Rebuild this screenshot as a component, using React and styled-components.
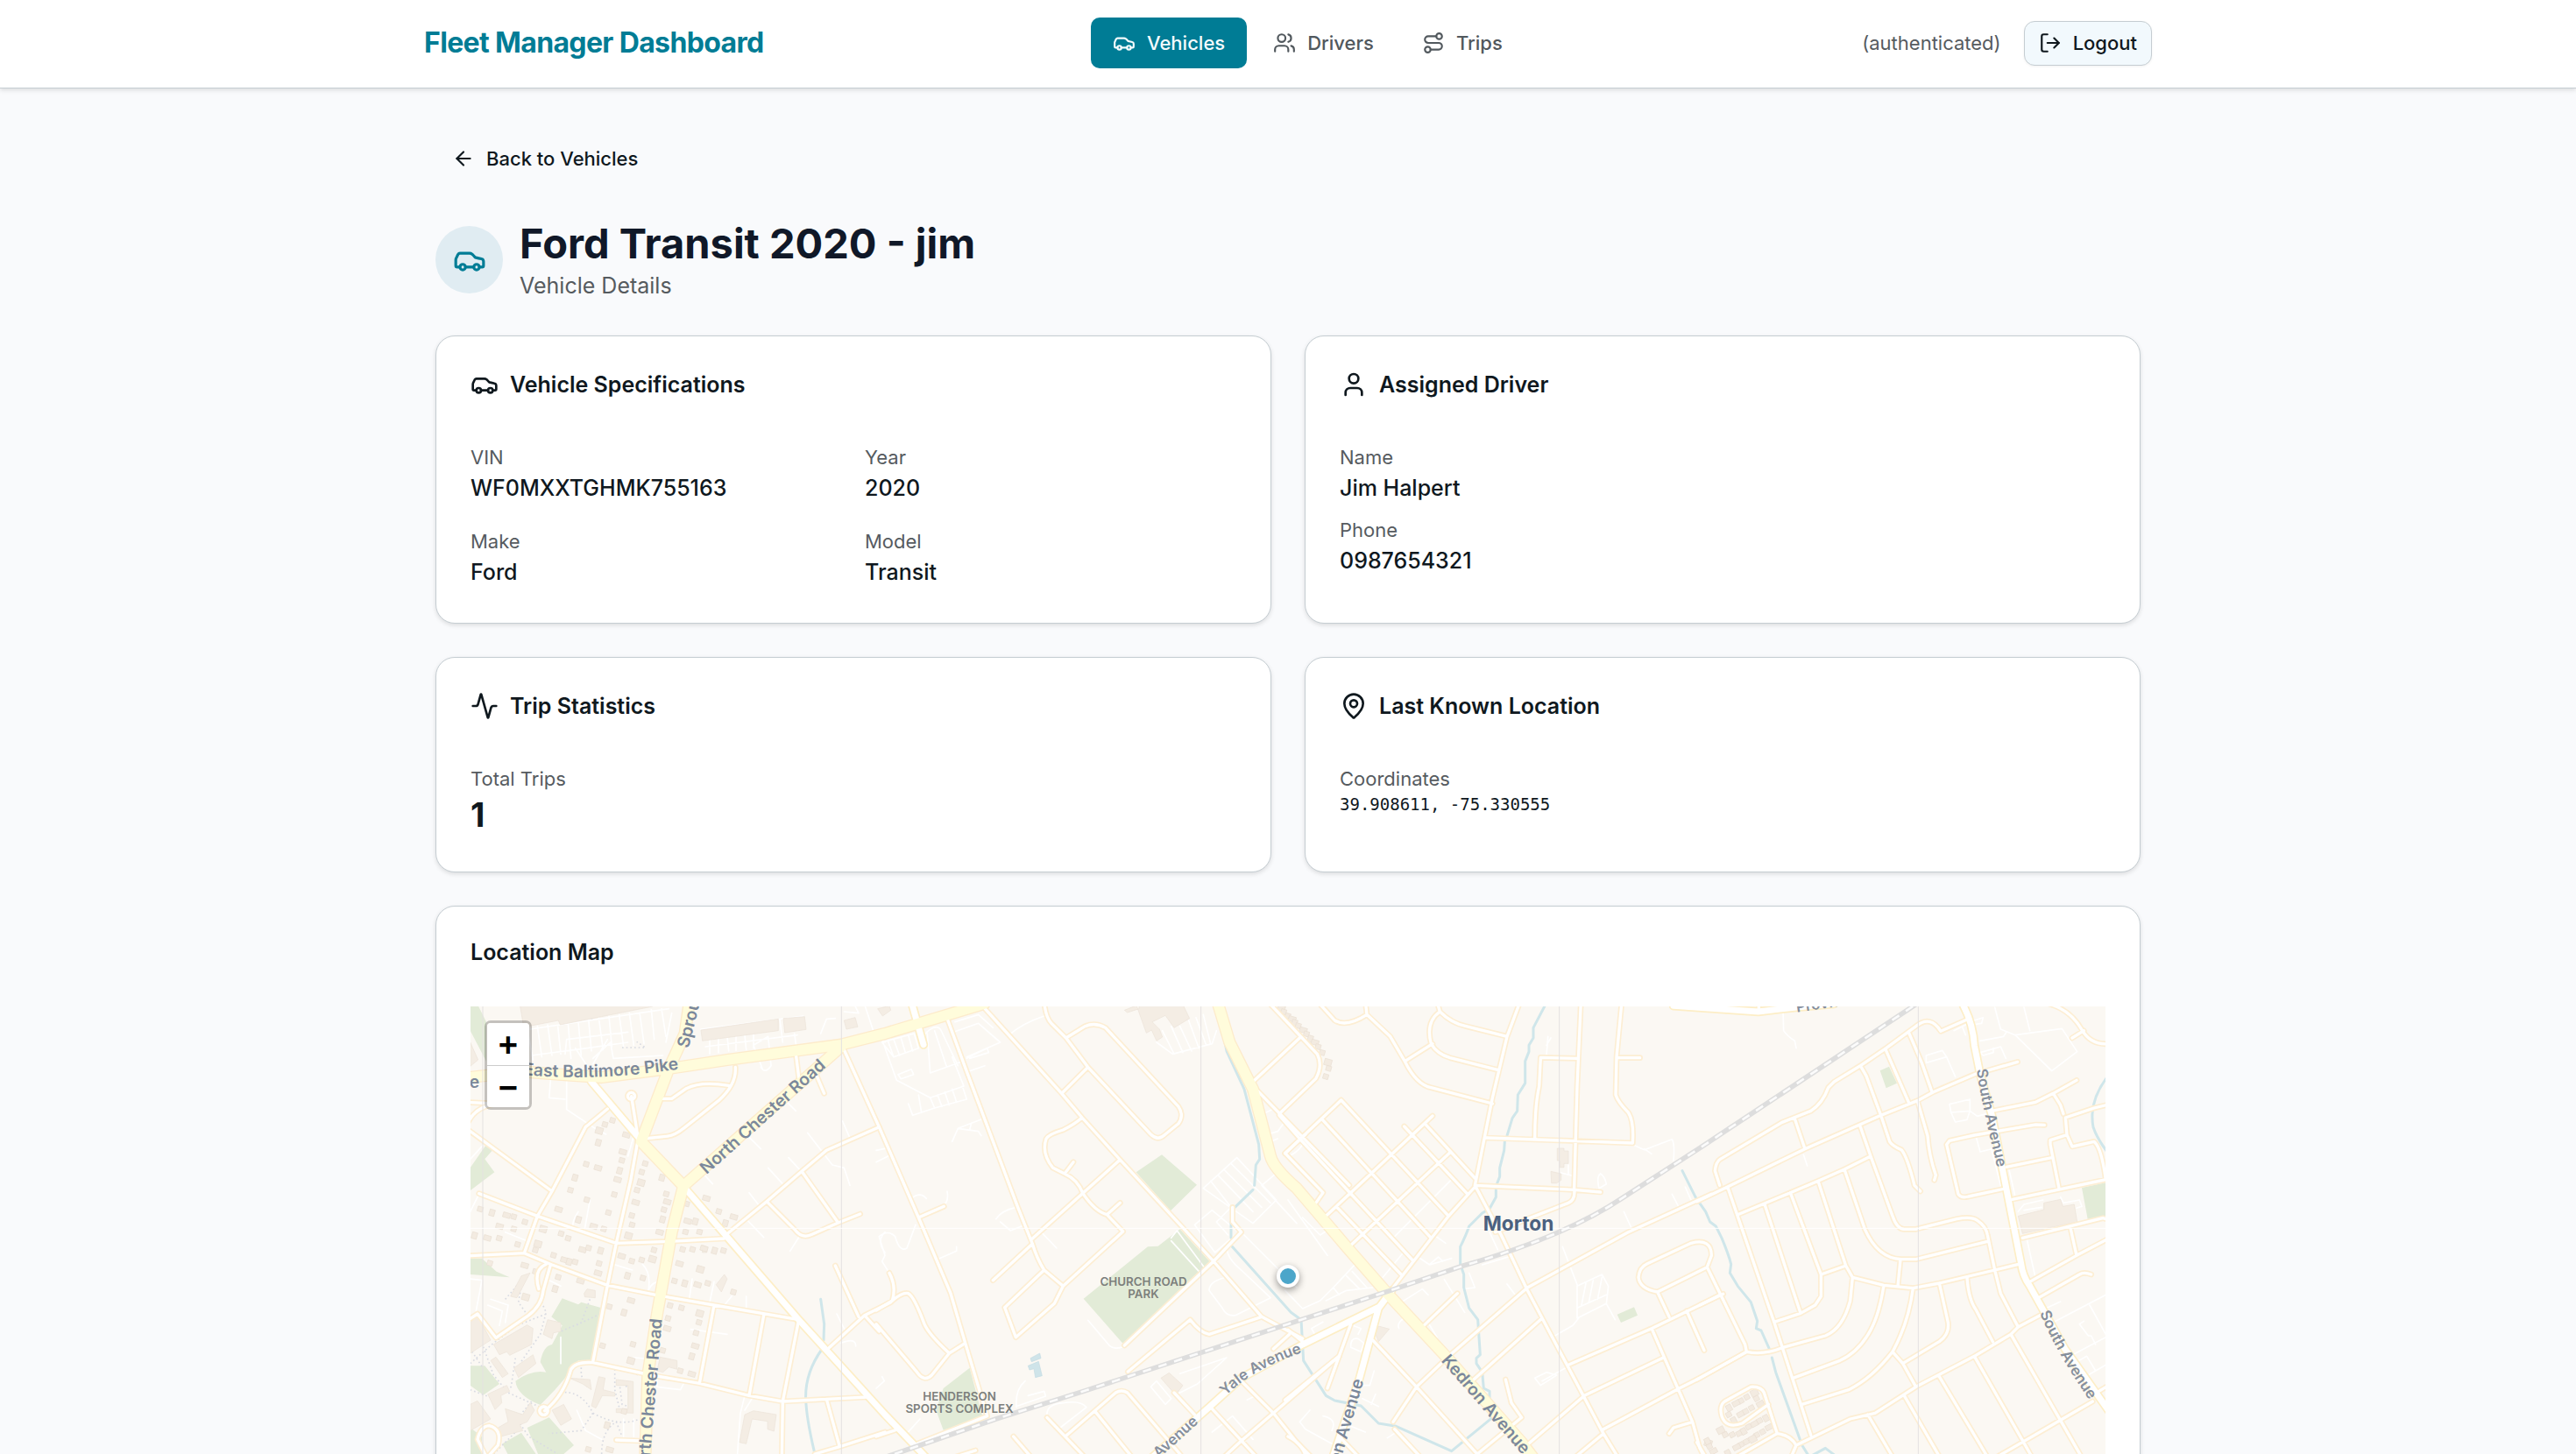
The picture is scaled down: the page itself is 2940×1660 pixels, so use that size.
import React from "react";
import styled, { createGlobalStyle } from "styled-components";
import {
  Activity,
  ArrowLeft,
  Car,
  LogOut,
  MapPin,
  Route,
  User,
  Users,
} from "lucide-react";

const GlobalStyle = createGlobalStyle`
  * {
    box-sizing: border-box;
  }

  body {
    margin: 0;
    background: #f9fafc;
    color: #0f181e;
    font-family: Inter, "Liberation Sans", sans-serif;
    font-size: 25px;
    line-height: 38px;
  }
`;

const Header = styled.header`
  background: #ffffff;
  border-bottom: 1px solid #c5cdd2;
  box-shadow: 0 2px 5px rgba(0, 0, 0, 0.12);
`;

const HeaderInner = styled.div`
  display: flex;
  align-items: center;
  justify-content: space-between;
  max-width: 2048px;
  margin: 0 auto;
  padding: 20px 38px 22px;
`;

const Brand = styled.div`
  color: #007c95;
  font-size: 32px;
  font-weight: 700;
  letter-spacing: -0.02em;
`;

const Nav = styled.nav`
  display: flex;
  gap: 5px;
  margin-right: 12px;
`;

const NavLink = styled.a`
  display: flex;
  align-items: center;
  gap: 13px;
  height: 58px;
  padding: 0 25px;
  border-radius: 10px;
  background: ${(props) => (props.$active ? "#007c95" : "transparent")};
  color: ${(props) => (props.$active ? "#f4fbfd" : "#51585d")};
  font-size: 22px;
  font-weight: 500;
  text-decoration: none;
`;

const Account = styled.div`
  display: flex;
  align-items: center;
  gap: 26px;
  color: #565b5f;
  font-size: 22px;
`;

const LogoutButton = styled.button`
  display: flex;
  align-items: center;
  gap: 13px;
  height: 51px;
  padding: 0 16px;
  border: 1px solid #c5cdd2;
  border-radius: 12px;
  background: #f2f9fd;
  box-shadow: 0 1px 3px rgba(0, 0, 0, 0.06);
  color: #0f181e;
  font-family: inherit;
  font-size: 22px;
  font-weight: 500;
`;

const Main = styled.main`
  display: flex;
  flex-direction: column;
  gap: 38px;
  max-width: 2048px;
  margin: 0 auto;
  padding: 51px;
`;

const BackLink = styled.a`
  display: flex;
  align-items: center;
  align-self: flex-start;
  gap: 13px;
  height: 58px;
  padding: 0 19px;
  color: #0f181e;
  font-size: 22px;
  font-weight: 500;
  text-decoration: none;
`;

const TitleRow = styled.div`
  display: flex;
  align-items: center;
  gap: 19px;
`;

const TitleIcon = styled.div`
  display: flex;
  align-items: center;
  justify-content: center;
  width: 77px;
  height: 77px;
  border-radius: 50%;
  background: #e0ecf2;
  color: #007c95;
`;

const Title = styled.h1`
  margin: 0;
  color: #101828;
  font-size: 47px;
  font-weight: 700;
  line-height: 59px;
`;

const Subtitle = styled.p`
  margin: 0;
  color: #565b5f;
`;

const CardGrid = styled.div`
  display: grid;
  grid-template-columns: 1fr 1fr;
  gap: 38px;
`;

const Card = styled.section`
  display: flex;
  flex-direction: column;
  gap: ${(props) => (props.$compact ? "49px" : "51px")};
  padding: 39px;
  border: 1px solid #c5cdd2;
  border-radius: 22px;
  background: #ffffff;
  box-shadow: 0 2px 5px rgba(0, 0, 0, 0.12);
`;

const CardTitle = styled.h2`
  display: flex;
  align-items: center;
  gap: 13px;
  margin: 0;
  font-size: 25px;
  font-weight: 600;
  line-height: 26px;
`;

const Fields = styled.dl`
  display: grid;
  grid-template-columns: ${(props) => (props.$columns === 2 ? "1fr 1fr" : "1fr")};
  gap: ${(props) => (props.$columns === 2 ? "26px" : "13px")};
  margin: 0;
`;

const FieldLabel = styled.dt`
  color: #565b5f;
  font-size: 22px;
  line-height: 32px;
`;

const FieldValue = styled.dd`
  margin: 0;
  font-weight: 500;
`;

const StatValue = styled(FieldValue)`
  font-size: 38px;
  font-weight: 700;
  line-height: 51px;
`;

const CodeValue = styled(FieldValue)`
  font-family: "DejaVu Sans Mono", monospace;
  font-size: 19px;
  font-weight: 400;
  line-height: 26px;
`;

const MapFrame = styled.div`
  position: relative;
  height: 616px;
  overflow: hidden;
  background: #fbf8f3;
`;

const MapDrawing = styled.svg`
  display: block;
  width: 100%;
  height: 100%;
  font-family: Inter, sans-serif;
`;

const ZoomControl = styled.div`
  position: absolute;
  top: 16px;
  left: 16px;
  display: flex;
  flex-direction: column;
  border: 3px solid rgba(0, 0, 0, 0.22);
  border-radius: 7px;
  background-clip: padding-box;
`;

const ZoomButton = styled.button`
  width: 48px;
  height: 48px;
  padding: 8px 0 0;
  border: 0;
  border-radius: ${(props) => (props.$last ? "0 0 4px 4px" : "4px 4px 0 0")};
  border-top: ${(props) => (props.$last ? "1px solid #cccccc" : "0")};
  background: #ffffff;
  color: #000000;
  font-family: "Liberation Mono", monospace;
  font-size: 38px;
  font-weight: 700;
  line-height: 40px;
`;

const Marker = styled.div`
  position: absolute;
  top: 50%;
  left: 50%;
  width: 26px;
  height: 26px;
  margin: -13px 0 0 -13px;
  border: 4px solid #ffffff;
  border-radius: 50%;
  background: #4ca6ca;
  box-shadow: 0 3px 8px rgba(0, 0, 0, 0.4);
`;

// The map is drawn in four sections, each with its own origin.
const SECTIONS = [
  {
    x: -21,
    green: [
      "M20 20H45L75 80V215L20 110Z",
      "M20 580L75 500L100 515L70 550L103 595L20 658Z",
      "M20 890H60L110 935L155 955L20 945Z",
      "M335 1027L390 1048L400 1040L470 1060L435 1245L390 1240L345 1300L310 1340L260 1392Q180 1360 175 1310Q230 1270 280 1280L260 1245Q270 1190 300 1185L335 1120L298 1090Z",
      "M20 1258H70L120 1320L65 1358L20 1325Z",
      "M215 1470L290 1435L375 1530L340 1560L365 1700H310Z",
      "M130 1525L195 1487L300 1640H190Z",
      "M20 1470L60 1500V1600H20Z",
    ],
    buildings: [
      "M190 20L203 98L322 75L328 90L645 27V20Z",
      "M810 108L1075 70V110L815 145Z",
      "M1092 68L1165 62L1170 106L1097 117Z",
      "M1300 75L1338 65L1347 97L1308 105Z",
      "M20 150L47 210L20 232Z",
      "M20 1110L45 1085L90 1170L20 1215Z",
      "M100 1185L215 1118L235 1130L230 1185L155 1222L145 1210L120 1220Z",
      "M285 1100L330 1110V1140L305 1145L300 1165L270 1150Z",
      "M20 1390L45 1378L90 1440L20 1480Z",
      "M140 1405L200 1425L225 1385L240 1410L215 1450L190 1460L200 1480L125 1500L115 1470L150 1450Z",
      "M460 1295L482 1300L475 1340L515 1350V1362L472 1360L450 1403L435 1395Z",
      "M520 1305L578 1312V1420L520 1418V1405H560V1325L520 1325Z",
      "M990 1412L1068 1425L1060 1482L1038 1475V1448L985 1440L965 1525L942 1520L960 1425Z",
      "M670 1228L728 1240V1270L700 1262L680 1280L660 1275Z",
      "M300 1410L340 1390L367 1440L330 1462Z",
      "M195 950L225 940L180 1025L158 1020Z",
      "M90 1240L108 1228L150 1285L130 1298Z",
      "M170 1265L235 1220L245 1250L185 1298Z",
      "M360 1300L430 1305L435 1340L405 1320Z",
      "M815 870V845L830 850V870Z",
      "M890 945L900 960L880 1005L862 980Z",
      "M80 1355L145 1325L155 1345L125 1360L128 1385L105 1408Z",
      "M410 1010L420 995L448 1000V1025L412 1022Z",
    ],
    houses: [
      [460, 450], [482, 432], [508, 418], [552, 467], [460, 492], [418, 568], [540, 525], [540, 555],
      [533, 588], [522, 620], [620, 566], [608, 595], [603, 628], [592, 657], [514, 672], [584, 698],
      [678, 612], [692, 670], [692, 696], [684, 724], [680, 755], [666, 800], [574, 744], [575, 776],
      [560, 810], [494, 734], [478, 790], [455, 580], [380, 612], [364, 657], [320, 722], [420, 690],
      [392, 756], [440, 780], [332, 806], [356, 822], [268, 787], [208, 766], [170, 748], [142, 742],
      [96, 732], [55, 722], [118, 780], [170, 790], [36, 810], [76, 820], [120, 822], [183, 843],
      [250, 838], [244, 862], [306, 880], [340, 895], [360, 900], [380, 903], [402, 860], [426, 855],
      [468, 862], [536, 882], [574, 900], [608, 896], [642, 890], [650, 862], [462, 908], [455, 940],
      [560, 948], [612, 958], [395, 967], [322, 955], [312, 993], [204, 914], [88, 907], [244, 936],
      [208, 1020], [748, 860], [782, 860], [818, 856], [858, 862], [888, 864], [734, 908], [720, 968],
      [756, 974], [796, 980], [834, 976], [922, 1006], [806, 925], [758, 800], [806, 800], [762, 762],
      [792, 762], [762, 704], [826, 684], [872, 730], [895, 768], [920, 748], [705, 1052], [744, 1060],
      [804, 1076], [804, 1110], [794, 1146], [788, 1190], [780, 1224], [698, 1096], [692, 1130],
      [497, 1056], [548, 1074], [568, 1034], [474, 1190], [578, 1185], [568, 1238], [680, 1206],
      [740, 1276], [776, 1286], [490, 1460], [425, 1545], [495, 1545], [548, 1415],
    ],
    minor: [
      "M0 440L300 660L415 440Q440 420 490 378",
      "M50 668L250 745L520 838L700 832L890 822",
      "M300 660L250 745L205 872L0 882",
      "M205 872L300 912L490 982L670 1018L855 1050L1145 1100",
      "M595 480L570 620L520 838L490 982L440 1245",
      "M572 335L595 480",
      "M615 480L690 472Q720 470 750 445L870 350Q932 295 928 235",
      "M670 343H710L760 308Q810 282 905 298",
      "M1135 190L1145 270",
      "M1200 250L1232 325",
      "M1295 165L1420 440",
      "M1420 440L1240 520L1155 592L1035 695L895 810",
      "M1155 592L1280 768",
      "M1035 695L1130 790Q1155 825 1190 808L1280 768L1355 738",
      "M1270 915L1350 1090",
      "M1460 1040L1370 1085L1250 1195",
      "M1370 1085L1420 1140",
      "M1145 1100L1090 1380L1085 1700",
      "M1025 1085L975 1360",
      "M855 1050L805 1318",
      "M275 1412Q340 1360 365 1270Q380 1243 440 1247L640 1290L805 1318L975 1360L1090 1380L1240 1372L1380 1365",
      "M1240 1372L1285 1535",
      "M1200 1560L1285 1535L1440 1485",
      "M0 1110L45 1080L108 1162L220 1085Q265 1050 270 1000L295 912",
      "M280 910Q235 930 255 995",
      "M520 1512L600 1515",
      "M75 1570L45 1510Q55 1465 85 1463Q130 1475 115 1530L80 1570",
      "M0 355L110 360Q40 370 15 420",
      "M272 1398A14 14 0 1 1 271 1398",
      "M572 322A12 12 0 1 1 571 322",
    ],
    primary: ["M435 285L600 480", "M760 655L1140 1095L1440 1425L1560 1550L1700 1700"],
    yellow: [
      "M0 272L200 250Q350 262 470 270L700 240L900 210L1290 158L1440 120L1780 18",
      "M772 0L755 120L700 240L605 490L750 642L710 800L660 1080L628 1290L615 1700",
      "M750 642L1290 165",
    ],
    lanes: [
      "M215 100L235 210M250 95L265 200M285 90L300 195M320 95L330 190M355 85L365 205M390 78L400 195M425 70L435 180M460 65L475 175M495 60L505 165M530 55L545 165M565 50L580 160M600 48L615 155M640 38L650 140M675 35L690 130M710 50L690 150",
      "M230 195L420 170L560 150M225 105L700 35M345 190L350 140L560 115",
      "M440 205L500 150L510 205L680 195M380 170L420 230M490 140L440 225",
      "M810 105L1160 60M825 165L1140 125M840 140V190M870 135V185M900 130L905 180M930 130V178M960 125L965 175M990 120V170M1080 70L1090 150M1130 120L1140 190",
      "M350 280V380L440 440L485 465M295 280L290 340L345 345M970 470L1015 515M800 580L850 635",
      "M1175 460L1260 570L1300 580L1320 640M1110 545L1170 610L1205 650M1040 580L1090 635M975 665L1010 710M960 750L1025 818",
      "M1150 810L1115 865M1440 800Q1410 830 1440 870M1100 350L1135 385M1295 420L1325 490M1020 240L990 160L1040 130L1050 230Q1030 260 1015 235",
      "M140 800L215 830M390 730Q370 760 370 785M430 690L410 800M580 470L560 540",
      "M510 910L575 930M610 910Q640 940 630 1000Q640 970 680 965M780 960L770 1030M855 970L840 1040M915 1020L890 1050M965 1020V1065",
      "M20 960L60 965L40 1070M90 1030L150 1050L140 1110M80 1050L130 1070L120 1120M20 550L75 490",
      "M1275 1080L1305 1140M1290 1180Q1340 1160 1340 1190M960 1360L945 1420L935 1560M985 1370L960 1410",
      "M580 1230L650 1235M775 1133L900 1150M660 1300V1330L740 1340L750 1320M385 1410L415 1480L470 1510M545 1440V1500M580 1440V1500",
      "M1220 120L1240 70L1270 68M1300 45L1350 50L1335 20M1370 20L1400 110L1440 150M20 730L50 670M280 960L330 985M330 1160V1250",
    ],
    dotted: [
      "M295 920L260 1030L280 1075L260 1150L190 1250",
      "M20 1250L100 1180L180 1120L280 1080",
      "M60 1180L100 1290L150 1350L260 1400",
      "M140 1030L200 960L185 1040L220 1090",
      "M430 1030L400 1110L330 1140M465 1080L380 1120",
      "M400 1250V1290L420 1330M515 1270V1340L530 1400M440 1250L600 1290",
      "M330 1350Q400 1340 440 1420Q530 1470 600 1440M440 1420L400 1480L290 1490M470 1560Q470 1480 520 1450L540 1500",
      "M230 1380L180 1440L220 1500L320 1560M20 1340L100 1370L160 1330L175 1230M60 1260L20 1200M100 1560L180 1480",
      "M540 168H620L590 148M310 27H345M432 25L437 70",
      "M530 1310L570 1340V1400L540 1390Z",
    ],
    water: ["M1220 1030L1232 1115L1230 1170", "M1225 1200Q1160 1290 1170 1390Q1175 1460 1205 1580"],
  },
  {
    x: 1389,
    green: [
      "M890 595L978 535L1098 638L1008 727Z",
      "M1040 790L1150 910L845 1182L710 1028L930 850L965 848Z",
      "M320 1265L365 1435L230 1478L205 1410L230 1335Z",
    ],
    buildings: [
      "M890 20L925 118L943 108L960 145L980 132L970 105L945 80L990 58L1020 100L1073 68L1050 20Z",
      "M850 40L900 20V35L860 48Z",
      "M5 35L45 25L50 40L22 60Z",
      "M975 1300L1003 1282L1050 1325L1025 1358Z",
    ],
    pools: ["M528 1232L560 1215L564 1232L532 1244Z", "M520 1258L556 1243L568 1292L545 1298L540 1268L525 1272Z"],
    houses: [
      [1385, 32], [1396, 46], [1410, 60], [1422, 70], [1434, 82], [1446, 94], [1460, 108], [1474, 122],
      [1488, 136], [1500, 150], [1514, 166], [1528, 186], [1545, 216], [1550, 240], [1540, 268],
    ],
    minor: [
      "M10 440L145 750L255 1010L305 1180L380 1430L140 1525",
      "M350 10L635 325L705 408L835 552L1050 785L1155 900L1320 1090L1460 1165",
      "M240 60L310 250L485 715L535 840Q550 890 575 930L640 985L610 1045L478 1160L440 1058L575 930",
      "M575 10Q580 65 600 85L650 135L725 235L940 465Q965 490 990 465L1035 428Q1055 400 1035 370L785 100Q750 80 715 95L650 135",
      "M725 235L635 325",
      "M705 408Q680 430 640 450Q590 465 582 480Q565 530 605 580L645 600Q690 620 708 668Q750 730 790 740L845 798L640 985",
      "M645 600L675 560",
      "M790 740L835 700",
      "M835 552L535 822",
      "M535 840L400 965",
      "M145 750L232 712",
      "M1155 900L1250 800L1220 765V715",
      "M1155 900L850 1188",
      "M1320 1090L1140 1150Q1110 1145 1075 1100L862 1278",
      "M0 1068L55 1035Q90 1005 110 1010Q130 1020 165 1115Q180 1150 250 1215",
      "M45 940Q70 985 55 1035",
      "M0 1115L140 1280Q165 1315 190 1290L250 1215L305 1180",
      "M0 1500L75 1475",
      "M585 1435L780 1640",
      "M650 1498L820 1350Q840 1338 860 1350L1040 1560L1100 1640",
      "M750 1415L900 1600",
      "M470 1500L590 1640",
      "M340 1548L240 1580",
      "M1290 285L1450 135",
      "M1350 20L1510 190Q1530 230 1505 275L1380 395",
      "M1300 310L1620 640",
      "M1400 530L1470 465M1400 530L1530 665L1495 715",
      "M1250 1310L1360 1420L1440 1520L1520 1600",
      "M1145 1400L1330 1600",
      "M1020 1350L1090 1425",
      "M1585 1225L1250 1515L1180 1580",
      "M1415 1150L1360 1200",
    ],
    primary: ["M120 10L162 158"],
    yellow: ["M1165 0L1210 150L1290 310L1350 540Q1360 580 1440 650L1610 850L1750 1010L1950 1225L2210 1520L2300 1640"],
    lanes: [
      "M20 150L130 120L145 170L60 200ZM40 145L60 200M60 140L80 195M85 135L100 185M110 125L125 180",
      "M20 140L70 280L185 340L300 300L260 200M175 120L185 255L295 215M200 110L240 230M150 140Q200 80 220 105L280 230",
      "M110 360L125 400L200 375L310 345L295 300M145 330L155 390M185 340L200 375M210 330L225 370M235 320L250 365M260 310L275 355M75 260L120 242L128 260L85 275Z",
      "M265 115L350 85L425 150L310 200M270 80L350 55L400 100M455 125Q500 85 575 60M310 205L380 170L385 185L320 205",
      "M260 490L280 445L365 412M280 445L350 455L360 470M325 430L320 450M315 250L372 230",
      "M410 755Q430 725 480 715M425 765L460 795L510 775M565 800L618 855M0 560L45 538M0 520L40 512M210 893L275 865V850",
      "M120 685Q150 660 172 685M225 712Q250 700 243 660M135 775L105 855Q80 870 65 815Q40 790 10 815L30 880L20 900L45 940",
      "M960 150L1015 190L1150 155L1165 110M980 110L1020 190M1010 95L1050 185M1040 95L1080 180M1070 75L1105 170M1095 65L1130 160M1120 55L1145 155",
      "M1120 650L1235 545L1370 690L1290 770ZM1145 625L1215 715M1170 605L1290 730M1190 585L1320 715M1215 565L1350 700",
      "M1090 775L1150 725L1240 800L1160 870ZM1165 765L1215 715M1165 765L1205 810M1200 850Q1200 890 1250 930L1350 1025L1230 1085Q1200 1090 1185 1060L1140 1000Q1140 970 1190 957M1260 810L1440 990",
      "M1010 820L1030 795L1130 930M1110 940L1010 830M725 1102L800 1190Q820 1205 850 1190",
      "M480 1400Q475 1340 510 1310M485 1395L580 1362L575 1345L520 1360M585 1430Q580 1390 640 1385Q700 1375 720 1400L630 1470M105 1490L150 1440M0 1335L28 1310L20 1295",
      "M940 1330L960 1310L1010 1370L990 1390ZM1040 1285L1200 1230L1100 1320L1030 1355M1150 1485L1220 1430L1290 1510M1270 1375L1300 1360M1440 770L1320 640M1320 640L1380 590",
      "M1325 395L1355 380M1340 465L1375 455L1400 420M1350 490L1375 480",
    ],
    dotted: [],
    water: [
      "M1190 130L1200 180L1260 310L1310 500L1313 550L1300 570L1295 640",
      "M1290 655L1225 718",
      "M1215 765V820",
      "M1215 845L1420 1075L1455 1100L1463 1240L1540 1360L1570 1377L1660 1395L1720 1455L1780 1465L1970 1550L2110 1435",
    ],
  },
  {
    x: 2799,
    green: ["M1127 1082L1185 1057L1197 1085L1140 1110Z"],
    buildings: [
      "M922 513H945V522H960V565H945V578H930V555H922Z",
      "M900 592L935 600V622L920 632H902Z",
      "M310 1122L347 1132L310 1175L300 1150Z",
    ],
    houses: [[1437, 1520]],
    minor: [
      "M110 20L160 75Q200 100 270 55L265 10",
      "M270 55L350 130L400 215Q440 295 490 305L700 360",
      "M510 10L520 45Q560 85 610 95L750 130",
      "M520 45Q470 80 490 155Q510 190 555 203L720 245",
      "M495 155L400 215",
      "M795 10L750 130L700 340L640 640",
      "M1003 10L990 300L980 650Q985 690 960 700L820 755L710 800",
      "M1143 10L1125 200L1122 330Q1130 355 1165 390Q1185 420 1180 495L680 477",
      "M1125 203H1205",
      "M990 205L865 202L860 300Q845 370 845 480",
      "M640 640L980 655L1070 663",
      "M640 640L730 810L820 1000L1080 1490L1160 1620",
      "M182 348L550 745",
      "M118 415L490 820",
      "M-30 400L40 480L430 900",
      "M165 712L390 948",
      "M398 438L615 670",
      "M470 430L640 615",
      "M-10 530L182 348",
      "M495 402L130 745",
      "M555 527L210 850",
      "M640 645L550 745L360 990",
      "M820 990L1165 800L1450 670",
      "M820 990L550 1225L440 1330L360 1450",
      "M870 1095L630 1310",
      "M290 1170L440 1330L720 1640",
      "M365 1475L500 1620",
      "M215 1115L175 1225L135 1335",
      "M-10 1375L175 1225",
      "M465 1120L580 1010",
      "M960 1255L1245 1130L1410 1050L1490 1012",
      "M1015 1360L1285 1230",
      "M1080 1475L1340 1335L1410 1300L1570 1210",
      "M800 1545L1015 1360",
      "M960 1590L1080 1490",
      "M1245 1130L1385 1450L1410 1540L1440 1600",
      "M1305 1490L1320 1470L1385 1450",
      "M1265 1005L1305 1090",
      "M1435 920L1265 1005Q1205 995 1200 955Q1203 920 1230 908L1380 838Q1450 820 1450 880L1435 920",
      "M1365 1070L1425 1205",
      "M745 1305L765 1385L800 1435L600 1600",
      "M0 1135L50 1175",
      "M180 1505L290 1620",
      "M0 1500Q60 1530 65 1590",
    ],
    primary: ["M355 1000L310 1060L245 1300L130 1640", "M310 1057L50 1185L-160 1300L-270 1400L-520 1620"],
    yellow: [],
    lanes: [
      "M560 620L360 820M395 870L325 955M500 810L540 838M690 800L718 860M665 912L770 880",
      "M445 885L485 912L560 890M485 910L515 885L530 900M380 1045L460 995L480 1015M535 962L605 1075M620 940L640 990L600 995M750 978L780 1018",
      "M155 990L235 905M155 990L175 1015M155 990L110 1035L50 1062L-10 1000M200 950L245 995M220 935L270 990M130 1035L200 1000L290 990M235 905L300 990",
      "M990 985L1075 945L1097 985L1090 1045L990 1095ZM1020 975L1005 1050M1045 965L1030 1040M1075 955L1060 1030M990 1060L1090 1015M1090 1045L1120 1100M940 850L990 980M995 1095L975 1120L905 1160",
      "M845 1300L885 1280L920 1290L865 1325ZM870 1310L960 1260M1180 500L1220 518L1315 482Q1325 500 1320 555M1220 515L1245 532",
      "M1070 600Q1055 610 1065 650L1090 635Q1085 610 1070 600M960 570V600M935 597L975 607M885 195L890 130M900 135L885 160",
      "M1150 730L1180 795M1315 670L1340 718M1360 645L1382 695M80 1130L120 1108M80 1130L95 1155M210 1115L250 1130L240 1150M215 1190Q215 1160 240 1165L260 1180L250 1210L215 1195",
      "M380 1130Q370 1110 405 1090L435 1135M480 1110L510 1160M300 1355L285 1390M255 1370L310 1397M40 1450L75 1410M40 1450L60 1475L150 1525M120 1430Q170 1440 150 1480M215 1465L265 1485M295 1275L280 1325H260M340 1505L380 1480",
      "M0 540Q30 530 50 500M0 690L135 880M50 750L110 810L140 790",
    ],
    dotted: [],
    water: [
      "M882 20L840 100V135L825 160V182L812 215V290L787 330L785 385L768 410L750 470",
      "M742 490L740 520L725 580V610L715 636",
      "M712 655L712 680L690 720L665 735L620 780Q610 810 590 850V910L602 945V990L620 1060L650 1100L658 1220L645 1232V1250L665 1280L670 1335L690 1345V1370L718 1405",
    ],
  },
  {
    x: 4209,
    green: ["M617 247L648 233L675 290L638 307Z", "M1308 648L1400 628V750L1328 755Z"],
    buildings: ["M1090 745L1178 723V700L1235 688L1243 712L1282 705L1292 765L1105 805Z"],
    houses: [
      [184, 1350], [162, 1365], [142, 1378], [122, 1388], [100, 1400], [195, 1370], [205, 1390], [100, 1425],
      [116, 1443], [138, 1425], [158, 1414], [178, 1402], [68, 1478], [88, 1494], [112, 1494], [135, 1490],
      [150, 1480], [168, 1467], [186, 1458], [206, 1446], [226, 1435], [235, 1470], [216, 1484], [196, 1495],
      [178, 1508], [160, 1518], [142, 1528], [124, 1538], [26, 1514], [34, 1534], [45, 1552], [96, 1555],
    ],
    minor: [
      "M-10 695L95 645L360 515L620 400L745 350L800 320L940 260L1088 217",
      "M68 640L52 590Q55 560 70 550L280 425L380 385Q420 360 440 305L460 285L550 230L635 172L740 95Q790 55 825 112L915 72",
      "M325 412L360 515",
      "M95 645L255 1110L380 1495",
      "M130 740L310 665L405 625L495 585L585 540",
      "M550 230L570 265L620 400L650 490Q660 505 690 518Q710 540 735 640L755 660",
      "M550 440L585 540L660 745Q675 790 700 790H740L880 755Q930 745 950 760Q980 780 985 810L1010 930L1030 1010L1090 1125",
      "M635 172L715 355",
      "M715 115L760 220L795 320",
      "M745 350L780 470Q785 540 808 605L803 622",
      "M495 585L565 790Q610 890 690 893H740L985 832",
      "M687 893L678 985",
      "M222 705L345 1078",
      "M310 665L415 945V1020L395 1050L345 1078L255 1108",
      "M405 625L500 915L523 955L515 1035Q490 1130 430 1155L285 1195",
      "M415 945L500 915",
      "M523 955L630 982L730 992L820 975L1010 930L1100 908",
      "M630 982Q615 1080 585 1135Q545 1210 480 1240L325 1298",
      "M730 992Q715 1110 660 1210Q590 1300 510 1340L350 1390",
      "M660 1210L695 1250L740 1330",
      "M820 975L850 1110Q855 1150 820 1175L695 1250",
      "M915 955Q920 1030 945 1065L1003 1175",
      "M-10 1305L160 1210Q220 1222 285 1195",
      "M25 920L155 1185L160 1210",
      "M0 1050L70 1015",
      "M330 1530L515 1440L600 1420L740 1330L940 1225L1065 1150L1090 1125L1165 1085",
      "M575 1425L690 1620",
      "M700 1360L850 1620",
      "M820 1295L1015 1620",
      "M940 1225L1160 1610",
      "M1065 1150L1330 1610",
      "M1000 1580L1345 1380",
      "M235 1390L145 1455Q90 1475 75 1430Q65 1395 85 1380L175 1330Q210 1328 220 1350L265 1490L90 1590",
      "M265 1490Q310 1495 330 1530L300 1600",
      "M-10 1520L25 1580",
      "M1000 385L1150 355L1210 325L1290 280",
      "M1210 325L1235 365L1245 395",
      "M1400 363L1350 375L1252 408L1257 467L1200 485V500L1230 650",
      "M1257 467L1275 507L1350 490Q1375 510 1390 620L1070 688",
      "M1180 433L1150 432L940 468L855 487L845 500L885 670Q895 685 920 678L1050 650",
      "M1050 577L1205 545",
      "M1105 820L1380 752L1400 758",
      "M1270 790L1290 880",
      "M1400 822L1290 880L1130 970",
      "M1160 1025L1300 945Q1315 935 1340 945",
      "M1200 20Q1270 40 1310 110Q1340 160 1400 155",
      "M1275 135L1315 110",
      "M1350 1355L1400 1325",
      "M202 45V20",
    ],
    primary: [
      "M895 10Q935 80 940 160L960 260L1000 400L1100 908Q1105 950 1130 985L1250 1200L1420 1440",
      "M-90 25L200 45L330 30L460 18",
    ],
    yellow: [],
    lanes: [
      "M285 40L287 110Q300 130 325 145L330 170M355 535L368 573M775 220L845 200L830 178L775 195ZM845 200L875 268",
      "M1010 30L1030 105L1080 125L1240 103L1292 182L1205 248L1080 125M1110 30L1130 110M960 145L1040 130L1050 115M960 185L1030 165L1048 205M960 185L970 195L1005 185V170",
      "M870 110L940 75L970 65L965 85L930 90M900 100L910 125M855 362L925 345V385L860 390ZM860 390L875 423L915 415L925 385L950 403L1000 390",
      "M945 470L960 525L1020 510M1000 520L1030 640M1060 590L1080 680M1120 825L1150 960M1090 730L1110 705L1175 690M1110 725L1170 715M1235 680L1245 700L1300 690L1308 712L1290 718",
      "M1165 1070L1235 1038M1190 1120L1390 1015M1335 1050L1390 1150M1315 1105L1300 1115L1330 1155H1340L1355 1185M1240 1240L1390 1160M1280 1250L1325 1225L1355 1275M1320 1295L1390 1255",
    ],
    dotted: [],
    water: [
      "M-60 590L-15 680L20 730L35 765L55 780L75 820Q100 880 107 910L103 940L130 985L175 1040L197 1105L193 1130L210 1137L238 1200",
      "M247 1230L260 1280L350 1530L375 1570L430 1540L470 1570",
      "M1400 262Q1330 350 1347 440Q1360 480 1400 532",
    ],
  },
];

const RAILWAY =
  "M-1400 1578L-1260 1530L-1000 1440L-700 1345L0 1115L350 1000L600 915Q950 815 1150 680L1410 512L2150 20";

const SEAMS = [42, 1270, 2501, 3728, 4957];

const RoadLayer = ({ kind, stroke, width }) => (
  <g fill="none" stroke={stroke} strokeWidth={width} strokeLinecap="round" strokeLinejoin="round">
    {SECTIONS.map((section) => (
      <path key={section.x} transform={`translate(${section.x} -27)`} d={section[kind].join("")} />
    ))}
  </g>
);

const AreaLayer = ({ kind, fill, stroke }) => (
  <g fill={fill} stroke={stroke} strokeWidth="2">
    {SECTIONS.map((section) => (
      <path key={section.x} transform={`translate(${section.x} -27)`} d={(section[kind] || []).join("")} />
    ))}
  </g>
);

const StreetMap = () => (
  <MapDrawing viewBox="0 0 5598 1848" preserveAspectRatio="xMidYMid slice" role="img" aria-label="Map of Morton">
    <AreaLayer kind="green" fill="#e2ebd7" />
    <RoadLayer kind="lanes" stroke="#ffffff" width="5" />
    <g fill="none" stroke="#d9dbe2" strokeWidth="5" strokeDasharray="5 9">
      <path transform="translate(-21 -27)" d={SECTIONS[0].dotted.join("")} />
    </g>
    <AreaLayer kind="buildings" fill="#f4ede4" stroke="#ece3d8" />
    <AreaLayer kind="pools" fill="#cfe4e9" stroke="#c3dbe2" />
    {SECTIONS.map((section) => (
      <g key={section.x} transform={`translate(${section.x} -27)`} fill="#f3ebe1" stroke="#e9dfd3" strokeWidth="2">
        {section.houses.map(([x, y], index) => (
          <rect
            key={`${x}-${y}`}
            x={x - 10}
            y={y - 9}
            width={index % 3 === 0 ? 25 : 18}
            height={index % 4 === 0 ? 22 : 17}
            transform={`rotate(${section.x === 4209 ? -28 : 16} ${x} ${y})`}
          />
        ))}
      </g>
    ))}
    <RoadLayer kind="water" stroke="#cfe6ea" width="9" />
    <RoadLayer kind="minor" stroke="#fdeed3" width="20" />
    <RoadLayer kind="primary" stroke="#fdeec6" width="31" />
    <RoadLayer kind="yellow" stroke="#fdebcb" width="43" />
    <RoadLayer kind="minor" stroke="#ffffff" width="10" />
    <RoadLayer kind="primary" stroke="#ffffff" width="21" />
    <RoadLayer kind="yellow" stroke="#fffcdb" width="35" />
    <g transform="translate(2799 -27)" fill="none">
      <path d={RAILWAY} stroke="#dddddd" strokeWidth="17" />
      <path d={RAILWAY} stroke="#fbfbfb" strokeWidth="8" strokeDasharray="29 27" />
    </g>

    <g stroke="#e4e1e1" strokeWidth="3">
      {SEAMS.map((x) => (
        <line key={x} x1={x} y1="0" x2={x} y2="1848" />
      ))}
    </g>
    <line x1="0" y1="760" x2="5598" y2="760" stroke="#ffffff" strokeWidth="3" />

    <defs>
      <path id="baltimore" d="M180 234Q460 262 800 200" />
      <path id="yale" d="M2586 1334Q2680 1238 2870 1178" />
      <path id="south-upper" d="M5157 216Q5175 350 5245 620" />
      <path id="south-lower" d="M5373 1050Q5430 1190 5565 1380" />
    </defs>
    <g fill="#7b889b" fontSize="58" fontWeight="600">
      <text><textPath href="#baltimore">East Baltimore Pike</textPath></text>
      <text x="-4" y="278">e</text>
      <text transform="translate(746 145) rotate(-76)">Sproul Road</text>
      <text transform="translate(808 577) rotate(-42)">North Chester Road</text>
      <text transform="translate(656 1071) rotate(-85)" textAnchor="end">North Chester Road</text>
      <text transform="translate(3322 1214) rotate(49)">Kedron Avenue</text>
      <text transform="translate(3058 1282) rotate(-74)" textAnchor="end">Morton Avenue</text>
    </g>
    <g fill="#868f9d" fontSize="51" fontWeight="600">
      <text><textPath href="#yale">Yale Avenue</textPath></text>
      <text transform="translate(2494 1425) rotate(-42)" textAnchor="end">Yale Avenue</text>
      <text><textPath href="#south-upper">South Avenue</textPath></text>
      <text><textPath href="#south-lower">South Avenue</textPath></text>
      <text transform="translate(4541 20) rotate(-8)">Providence Road</text>
    </g>
    <g fill="#7c7f7c" fontSize="40" fontWeight="600" textAnchor="middle">
      <text x="2304" y="957">CHURCH ROAD</text>
      <text x="2304" y="998">PARK</text>
      <text x="1674" y="1349">HENDERSON</text>
      <text x="1674" y="1391">SPORTS COMPLEX</text>
    </g>
    <text x="3588" y="768" fill="#4b6180" fontSize="68" fontWeight="700" textAnchor="middle">
      Morton
    </text>
  </MapDrawing>
);

const Field = ({ label, children }) => (
  <div>
    <FieldLabel>{label}</FieldLabel>
    <FieldValue>{children}</FieldValue>
  </div>
);

function App() {
  return (
    <>
      <GlobalStyle />
      <Header>
        <HeaderInner>
          <Brand>Fleet Manager Dashboard</Brand>
          <Nav>
            <NavLink href="#vehicles" $active>
              <Car size={26} />
              Vehicles
            </NavLink>
            <NavLink href="#drivers">
              <Users size={26} />
              Drivers
            </NavLink>
            <NavLink href="#trips">
              <Route size={26} />
              Trips
            </NavLink>
          </Nav>
          <Account>
            <span>(authenticated)</span>
            <LogoutButton type="button">
              <LogOut size={26} />
              Logout
            </LogoutButton>
          </Account>
        </HeaderInner>
      </Header>

      <Main>
        <BackLink href="#vehicles">
          <ArrowLeft size={26} />
          Back to Vehicles
        </BackLink>

        <TitleRow>
          <TitleIcon>
            <Car size={38} />
          </TitleIcon>
          <div>
            <Title>Ford Transit 2020 - jim</Title>
            <Subtitle>Vehicle Details</Subtitle>
          </div>
        </TitleRow>

        <CardGrid>
          <Card>
            <CardTitle>
              <Car size={32} />
              Vehicle Specifications
            </CardTitle>
            <Fields $columns={2}>
              <Field label="VIN">WF0MXXTGHMK755163</Field>
              <Field label="Year">2020</Field>
              <Field label="Make">Ford</Field>
              <Field label="Model">Transit</Field>
            </Fields>
          </Card>

          <Card>
            <CardTitle>
              <User size={32} />
              Assigned Driver
            </CardTitle>
            <Fields>
              <Field label="Name">Jim Halpert</Field>
              <Field label="Phone">0987654321</Field>
            </Fields>
          </Card>

          <Card>
            <CardTitle>
              <Activity size={32} />
              Trip Statistics
            </CardTitle>
            <Fields>
              <div>
                <FieldLabel>Total Trips</FieldLabel>
                <StatValue>1</StatValue>
              </div>
            </Fields>
          </Card>

          <Card>
            <CardTitle>
              <MapPin size={32} />
              Last Known Location
            </CardTitle>
            <Fields>
              <div>
                <FieldLabel>Coordinates</FieldLabel>
                <CodeValue>39.908611, -75.330555</CodeValue>
              </div>
            </Fields>
          </Card>
        </CardGrid>

        <Card $compact>
          <CardTitle>Location Map</CardTitle>
          <MapFrame>
            <StreetMap />
            <ZoomControl>
              <ZoomButton type="button" aria-label="Zoom in">+</ZoomButton>
              <ZoomButton type="button" aria-label="Zoom out" $last>−</ZoomButton>
            </ZoomControl>
            <Marker />
          </MapFrame>
        </Card>
      </Main>
    </>
  );
}

export default App;
